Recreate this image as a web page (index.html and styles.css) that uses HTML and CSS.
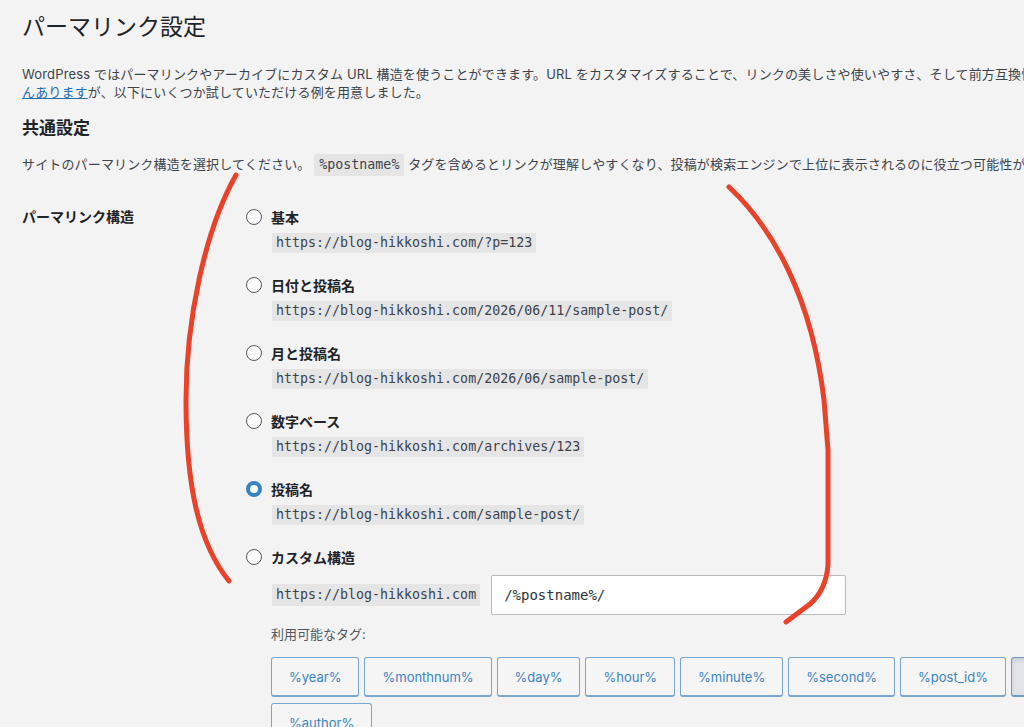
FILE: index.html
```html
<!DOCTYPE html>
<html lang="ja">
<head>
<meta charset="utf-8">
<title>パーマリンク設定</title>
<link rel="stylesheet" href="styles.css">
</head>
<body>
<div class="wrap">
  <h1 class="page-title">パーマリンク設定</h1>
  <p class="intro">WordPress ではパーマリンクやアーカイブにカスタム URL 構造を使うことができます。URL をカスタマイズすることで、リンクの美しさや使いやすさ、そして前方互換性を改善することができます。<a href="#">利用可能なタグがたくさ</a><br><a href="#">んあります</a>が、以下にいくつか試していただける例を用意しました。</p>
  <h2 class="section-title">共通設定</h2>
  <p class="desc">サイトのパーマリンク構造を選択してください。 <code>%postname%</code> タグを含めるとリンクが理解しやすくなり、投稿が検索エンジンで上位に表示されるのに役立つ可能性があります。</p>

  <div class="form-row">
    <div class="row-label">パーマリンク構造</div>
    <div class="row-field">
      <div class="option">
        <div class="radio-line"><span class="radio"></span><span class="opt-label">基本</span></div>
        <div class="code-line"><code>https://blog-hikkoshi.com/?p=123</code></div>
      </div>
      <div class="option">
        <div class="radio-line"><span class="radio"></span><span class="opt-label">日付と投稿名</span></div>
        <div class="code-line"><code>https://blog-hikkoshi.com/2026/06/11/sample-post/</code></div>
      </div>
      <div class="option">
        <div class="radio-line"><span class="radio"></span><span class="opt-label">月と投稿名</span></div>
        <div class="code-line"><code>https://blog-hikkoshi.com/2026/06/sample-post/</code></div>
      </div>
      <div class="option">
        <div class="radio-line"><span class="radio"></span><span class="opt-label">数字ベース</span></div>
        <div class="code-line"><code>https://blog-hikkoshi.com/archives/123</code></div>
      </div>
      <div class="option">
        <div class="radio-line"><span class="radio checked"></span><span class="opt-label">投稿名</span></div>
        <div class="code-line"><code>https://blog-hikkoshi.com/sample-post/</code></div>
      </div>
      <div class="option custom">
        <div class="radio-line"><span class="radio"></span><span class="opt-label">カスタム構造</span></div>
        <div class="custom-line"><code>https://blog-hikkoshi.com</code><div class="text-input">/%postname%/</div></div>
        <div class="tags-label">利用可能なタグ:</div>
        <div class="tags">
          <span class="tag">%year%</span>
          <span class="tag">%monthnum%</span>
          <span class="tag">%day%</span>
          <span class="tag">%hour%</span>
          <span class="tag">%minute%</span>
          <span class="tag">%second%</span>
          <span class="tag">%post_id%</span>
          <span class="tag active">%postname%</span>
          <span class="tag">%category%</span>
          <span class="tag">%author%</span>
        </div>
      </div>
    </div>
  </div>
</div>

<svg class="annot" width="1024" height="727" viewBox="0 0 1024 727" xmlns="http://www.w3.org/2000/svg">
  <path d="M236,175 C205,230 186,320 186,400 C186,490 200,545 229,581" />
  <path d="M729,187 C775,230 812,300 824,400 L828,450 L828,565 Q826,590 810,604 L786,622" />
</svg>
</body>
</html>
```

FILE: styles.css
```css
html, body {
  margin: 0;
  padding: 0;
}
body {
  background: #f3f3f3;
  color: #3c434a;
  font-family: Inter, "Noto Sans CJK JP", sans-serif;
  font-size: 13px;
  width: 1024px;
  height: 727px;
  overflow: hidden;
  position: relative;
}
.wrap {
  padding-left: 22px;
  width: 1400px;
}
.page-title {
  margin: 13px 0 0;
  font-size: 23px;
  font-weight: 400;
  line-height: 29px;
  color: #1d2327;
}
.intro {
  margin: 23px 0 0;
  line-height: 18px;
  white-space: nowrap;
  letter-spacing: 0.15px;
}
.intro a {
  color: #2271b1;
  text-decoration: underline;
}
.section-title {
  margin: 16px 0 0;
  font-size: 17px;
  font-weight: 700;
  line-height: 22px;
  color: #1d2327;
}
.desc {
  margin: 14px 0 0;
  line-height: 22px;
  white-space: nowrap;
  letter-spacing: 0.15px;
}
code {
  font-family: "DejaVu Sans Mono", monospace;
  font-size: 13.3px;
  background: #e5e5e5;
  color: #3c434a;
  padding: 2px 4px;
  line-height: 16px;
  display: inline-block;
  letter-spacing: 0;
}
.desc code {
  padding: 3px 5px;
}
.form-row {
  display: flex;
  margin-top: 31px;
}
.row-label {
  width: 224px;
  flex: none;
  font-size: 14px;
  font-weight: 700;
  color: #1d2327;
  line-height: 20px;
}
.row-field {
  display: flex;
  flex-direction: column;
}
.option {
  margin-bottom: 22px;
}
.radio-line {
  display: flex;
  align-items: center;
  height: 20px;
  gap: 9px;
}
.radio {
  width: 16px;
  height: 16px;
  box-sizing: border-box;
  border: 1.5px solid #50575e;
  border-radius: 50%;
  background: #fff;
  flex: none;
}
.radio.checked {
  border: 4.5px solid #3582c4;
}
.opt-label {
  font-size: 14px;
  font-weight: 700;
  color: #1d2327;
}
.code-line {
  margin-top: 6px;
  padding-left: 26px;
  height: 20px;
}
.code-line code {
  height: 20px;
  box-sizing: border-box;
}
.custom-line {
  margin-top: 8px;
  padding-left: 26px;
  display: flex;
  align-items: center;
  gap: 11px;
}
.custom-line code {
  height: 22px;
  box-sizing: border-box;
  padding: 3px 4px;
}
.text-input {
  width: 355px;
  height: 40px;
  box-sizing: border-box;
  background: #fff;
  border: 1px solid #b8babd;
  border-radius: 2px;
  font-family: "DejaVu Sans Mono", monospace;
  font-size: 14px;
  color: #2c3338;
  display: flex;
  align-items: center;
  padding-left: 12px;
}
.tags-label {
  margin-top: 9px;
  padding-left: 25px;
  line-height: 20px;
  color: #50575e;
}
.tags {
  margin-top: 13px;
  padding-left: 25px;
  width: 1000px;
  display: flex;
  flex-wrap: wrap;
  column-gap: 5px;
  row-gap: 6px;
}
.tag {
  height: 40px;
  box-sizing: border-box;
  display: inline-flex;
  align-items: center;
  padding: 0 17px;
  border: 1px solid #77a6d1;
  border-bottom-width: 2px;
  border-radius: 3px;
  color: #3a84c1;
  background: #f5f5f5;
  font-size: 13px;
}
.tag.active {
  background: #e1e5ea;
  border-color: #6f9ac4;
  box-shadow: inset 0 2px 4px rgba(0,0,0,0.12);
}
.annot {
  position: absolute;
  left: 0;
  top: 0;
  pointer-events: none;
}
.annot path {
  fill: none;
  stroke: #e8432a;
  stroke-width: 5;
  stroke-linecap: round;
  stroke-linejoin: round;
}
```
